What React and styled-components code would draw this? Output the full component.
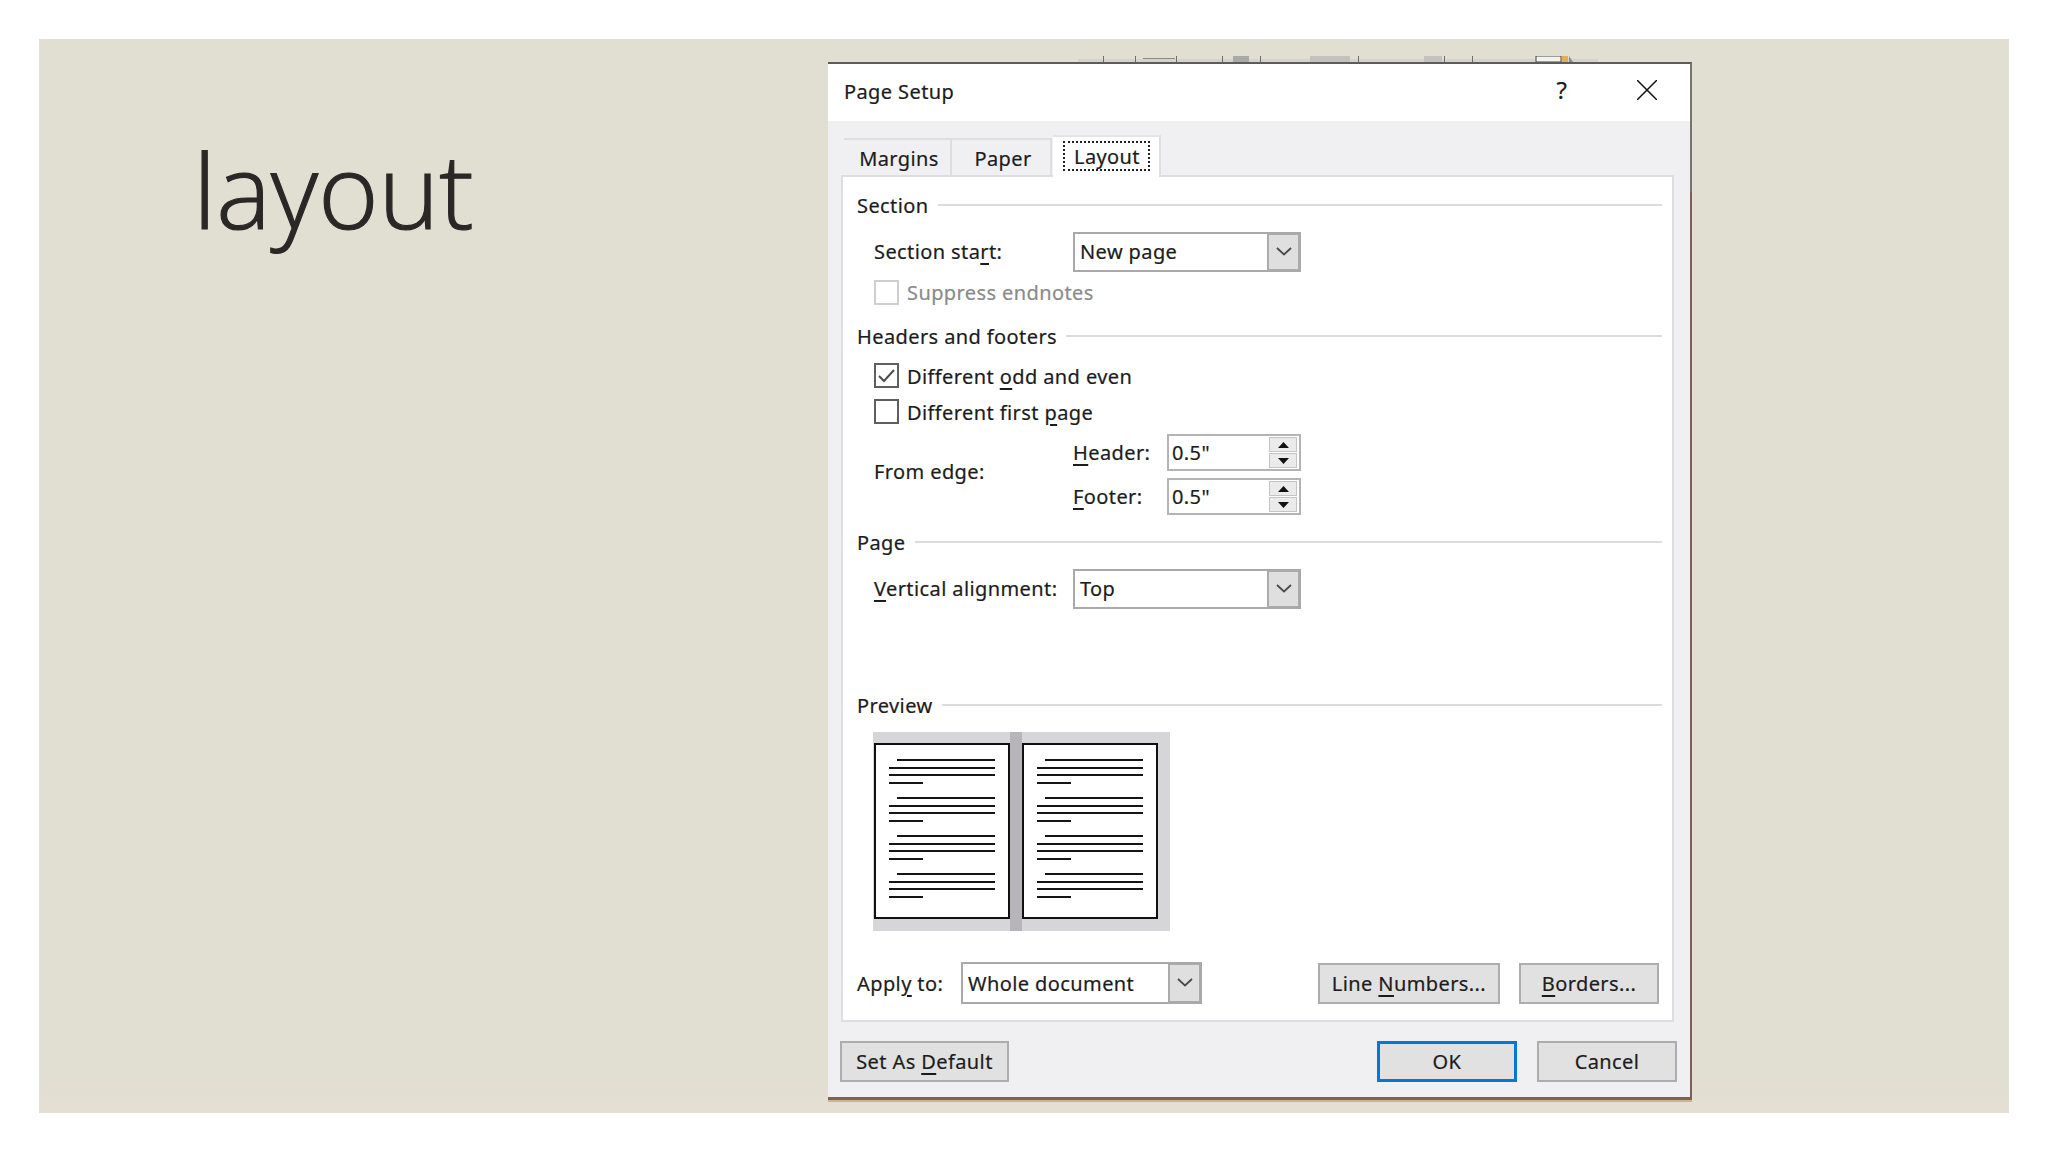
import styled, { createGlobalStyle } from 'styled-components'

const Global = createGlobalStyle`
  html, body {
    margin: 0;
    background: #fff;
  }
  body {
    font-family: 'Noto Sans', 'Open Sans', sans-serif;
    color: #1c1c1c;
    letter-spacing: 0.4px;
    -webkit-text-stroke: 0.2px currentColor;
  }
`

const Page = styled.div`
  width: 2048px;
  height: 1152px;
  padding: 39px;
  box-sizing: border-box;
`

const Slide = styled.div`
  width: 1970px;
  height: 1074px;
  display: flex;
  background: linear-gradient(#e1ded2 96%, #e5dfd3 100%);
`

const TitleCol = styled.div`
  width: 789px;
  padding: 90px 0 0 154px;
  box-sizing: border-box;
`

const SlideTitle = styled.h1`
  margin: 0;
  font-family: 'Open Sans', sans-serif;
  font-weight: 300;
  font-size: 103px;
  line-height: 120px;
  letter-spacing: 0;
  -webkit-text-stroke: 1.2px #2a2826;
  color: #2a2826;
`

const WindowCol = styled.div`
  width: 866px;
  padding-top: 17px;
`

const Ruler = styled.svg`
  display: block;
  width: 866px;
  height: 6px;
`

const Dialog = styled.div`
  position: relative;
  width: 864px;
  height: 1038px;
  box-sizing: border-box;
  background: #f0f0f3;
  border-top: 2px solid #5c5c5c;
  border-right: 2px solid #76746f;
  border-bottom: 3px solid #7d634f;
  box-shadow: 0 2px 0 #c9b394;

  &::after {
    content: '';
    position: absolute;
    right: -2px;
    top: 128px;
    bottom: -3px;
    width: 2px;
    background: #7d634f;
  }
`

const TitleBar = styled.div`
  height: 57px;
  box-sizing: border-box;
  display: flex;
  align-items: center;
  padding: 0 33px 5px 16px;
  background: #fff;
`

const DialogTitle = styled.div`
  font-size: 20px;
  flex: 1;
  margin-top: 3px;
`

const Help = styled.div`
  font-size: 24px;
  width: 16px;
  text-align: center;
  margin-right: 67px;
  margin-top: -2px;
`

const Tabs = styled.div`
  height: 54px;
  display: flex;
  align-items: flex-end;
  padding-left: 16px;
`

const Tab = styled.div`
  height: ${(p) => (p.$active ? '42px' : '37px')};
  width: ${(p) => p.$w}px;
  box-sizing: border-box;
  display: flex;
  align-items: center;
  justify-content: center;
  padding: ${(p) => (p.$active ? '0' : '1px 0 0 4px')};
  font-size: 20px;
  background: ${(p) => (p.$active ? '#fff' : 'transparent')};
  border-top: 2px solid ${(p) => (p.$active ? '#e4e4e6' : '#dedee1')};
  border-right: 2px solid #dedee1;
  position: relative;
  margin-bottom: ${(p) => (p.$active ? '-2px' : '0')};
  margin-left: ${(p) => (p.$active ? '1px' : '0')};
`

const Focus = styled.span`
  width: 87px;
  height: 30px;
  margin-bottom: 2px;
  padding-left: 2px;
  box-sizing: border-box;
  border: 2px dotted #222;
  display: flex;
  align-items: center;
  justify-content: center;
`

const Panel = styled.div`
  width: 833px;
  height: 847px;
  margin-left: 13px;
  box-sizing: border-box;
  padding: 0 10px 0 14px;
  background: #fff;
  border: 2px solid #dedee1;
`

const Heading = styled.div`
  display: flex;
  align-items: center;
  height: 26px;
  margin-top: ${(p) => p.$top}px;
  font-size: 20px;
`

const HeadingLine = styled.div`
  flex: 1;
  height: 2px;
  margin-left: 9px;
  margin-top: -1px;
  background: #dcdcdc;
`

const Row = styled.div`
  display: flex;
  align-items: center;
  margin-top: ${(p) => p.$top}px;
  padding-left: ${(p) => p.$indent ?? 17}px;
  font-size: 20px;
`

const Label = styled.div`
  width: ${(p) => p.$w ?? 199}px;
  flex-shrink: 0;
  padding-bottom: ${(p) => p.$lift ?? 2}px;
`

const Key = styled.span`
  text-decoration: underline;
  text-underline-offset: 4px;
  text-decoration-thickness: 2px;
`

const Combo = styled.div`
  width: ${(p) => p.$w ?? 228}px;
  height: ${(p) => p.$h ?? 40}px;
  box-sizing: border-box;
  display: flex;
  border: 2px solid #a9a9a9;
  background: #fff;
`

const ComboText = styled.div`
  flex: 1;
  padding: 0 0 ${(p) => p.$lift ?? 2}px 5px;
  display: flex;
  align-items: center;
`

const ComboButton = styled.div`
  width: 32px;
  box-sizing: border-box;
  padding-bottom: 2px;
  display: flex;
  align-items: center;
  justify-content: center;
  background: #dfdfdf;
  border: 1px solid #ababab;
  border-left-width: 2px;
`

const CheckRow = styled.div`
  display: flex;
  align-items: center;
  gap: 8px;
  height: 25px;
  margin-top: ${(p) => p.$top}px;
  margin-left: 17px;
  font-size: 20px;
  color: ${(p) => (p.$disabled ? '#8a8a8a' : 'inherit')};
`

const CheckText = styled.span`
  padding-top: 2px;
`

const Box = styled.span`
  width: 25px;
  height: 25px;
  box-sizing: border-box;
  display: flex;
  align-items: center;
  justify-content: center;
  border: 2px solid ${(p) => (p.$disabled ? '#cfcfcf' : '#5f5f5f')};
  background: #fff;
`

const EdgeGrid = styled.div`
  display: grid;
  grid-template-columns: 199px 94px 134px;
  grid-template-rows: 37px 37px;
  row-gap: 7px;
  align-items: center;
  margin: 10px 0 0 17px;
  font-size: 20px;
`

const EdgeLabel = styled.div`
  grid-row: 1 / span 2;
  margin-bottom: 6px;
`

const SpinInput = styled.div`
  height: 37px;
  box-sizing: border-box;
  display: flex;
  align-items: center;
  padding: 0 2px 0 3px;
  border: 2px solid #b4b4b4;
  background: #fff;
`

const SpinValue = styled.div`
  flex: 1;
`

const SpinButtons = styled.div`
  width: 28px;
  display: flex;
  flex-direction: column;
  gap: 1px;
`

const SpinButton = styled.div`
  height: 15px;
  display: flex;
  align-items: center;
  justify-content: center;
  background: #ebebeb;
  border: 1px solid #c4c4c4;
  box-sizing: border-box;
`

const PreviewBox = styled.div`
  display: flex;
  width: 297px;
  height: 199px;
  margin: 14px 0 0 16px;
  padding-left: 1px;
  box-sizing: border-box;
  background: #d6d5d8;
`

const Gutter = styled.div`
  width: 12px;
  background: #b7b5b9;
`

const Sheet = styled.div`
  width: 136px;
  height: 176px;
  margin-top: 11px;
  box-sizing: border-box;
  padding: 14px 13px 0;
  display: flex;
  flex-direction: column;
  gap: 13px;
  background: #fff;
  border: 2px solid #111;
`

const Para = styled.div`
  display: flex;
  flex-direction: column;
  gap: 5.67px;
`

const TextLine = styled.div`
  height: 2px;
  width: ${(p) => (p.$short ? '34px' : p.$indent ? '98px' : '106px')};
  margin-left: ${(p) => (p.$indent ? '8px' : '0')};
  background: #151515;
`

const Button = styled.div`
  width: ${(p) => p.$w}px;
  height: 41px;
  box-sizing: border-box;
  display: flex;
  align-items: center;
  justify-content: center;
  font-size: 20px;
  background: #e1e1e1;
  border: ${(p) => (p.$primary ? '3px solid #0078d7' : '2px solid #adadad')};
`

const ApplyActions = styled.div`
  margin-left: auto;
  padding-right: 3px;
  display: flex;
  gap: 19px;
`

const Footer = styled.div`
  display: flex;
  gap: 20px;
  margin-top: 19px;
  padding: 0 13px 0 12px;
`

const FooterSpacer = styled.div`
  flex: 1;
`

const Chevron = () => (
  <svg width="16" height="9" viewBox="0 0 16 9" fill="none" stroke="#4a4a4a" strokeWidth="1.8">
    <path d="M1 1l7 6.5L15 1" />
  </svg>
)

const Arrow = ({ down }) => (
  <svg width="11" height="6" viewBox="0 0 11 6" fill="#111">
    <path d={down ? 'M0 0h11L5.5 6z' : 'M5.5 0L11 6H0z'} />
  </svg>
)

const Spin = ({ value }) => (
  <SpinInput>
    <SpinValue>{value}</SpinValue>
    <SpinButtons>
      <SpinButton>
        <Arrow />
      </SpinButton>
      <SpinButton>
        <Arrow down />
      </SpinButton>
    </SpinButtons>
  </SpinInput>
)

const SheetPreview = () => (
  <Sheet>
    {[0, 1, 2, 3].map((i) => (
      <Para key={i}>
        <TextLine $indent />
        <TextLine />
        <TextLine />
        <TextLine $short />
      </Para>
    ))}
  </Sheet>
)

export default function App() {
  return (
    <Page>
      <Global />
      <Slide>
        <TitleCol>
          <SlideTitle>layout</SlideTitle>
        </TitleCol>
        <WindowCol>
          <Ruler viewBox="0 0 866 6">
            <rect x="250" y="3" width="520" height="3" fill="#d4d3cc" />
            <g fill="#6d6d6a">
              <rect x="275" y="0" width="1" height="6" />
              <rect x="307" y="0" width="1" height="6" />
              <rect x="348" y="0" width="1" height="6" />
              <rect x="394" y="0" width="1" height="6" />
              <rect x="432" y="0" width="1" height="6" />
              <rect x="530" y="0" width="1" height="6" />
              <rect x="616" y="0" width="1" height="6" />
              <rect x="644" y="0" width="1" height="6" />
            </g>
            <rect x="315" y="2" width="32" height="1" fill="#8a8a86" />
            <rect x="405" y="0" width="16" height="6" fill="#a9a9a6" />
            <rect x="482" y="0" width="40" height="6" fill="#c2c1bc" />
            <rect x="596" y="0" width="18" height="6" fill="#c2c1bc" />
            <rect x="708" y="0" width="25" height="6" fill="#f3f3ee" stroke="#444" />
            <rect x="734" y="0" width="6" height="6" fill="#e3ac58" />
            <path d="M741 0l4 6h-4z" fill="#8d8d88" />
          </Ruler>
          <Dialog>
            <TitleBar>
              <DialogTitle>Page Setup</DialogTitle>
              <Help>?</Help>
              <svg width="20" height="20" viewBox="0 0 20 20" stroke="#111" strokeWidth="1.5">
                <path d="M0 0l20 20M20 0L0 20" />
              </svg>
            </TitleBar>
            <Tabs>
              <Tab $w={108}>Margins</Tab>
              <Tab $w={100}>Paper</Tab>
              <Tab $w={108} $active>
                <Focus>Layout</Focus>
              </Tab>
            </Tabs>
            <Panel>
              <Heading $top={15}>
                Section
                <HeadingLine />
              </Heading>
              <Row $top={14}>
                <Label>
                  Section sta<Key>r</Key>t:
                </Label>
                <Combo>
                  <ComboText>New page</ComboText>
                  <ComboButton>
                    <Chevron />
                  </ComboButton>
                </Combo>
              </Row>
              <CheckRow $top={8} $disabled>
                <Box $disabled />
                Suppress endnotes
              </CheckRow>
              <Heading $top={18}>
                Headers and footers
                <HeadingLine />
              </Heading>
              <CheckRow $top={14}>
                <Box>
                  <svg width="17" height="14" viewBox="0 0 17 14" fill="none" stroke="#4d4d4d" strokeWidth="2">
                    <path d="M1 7l5 5L16 1" />
                  </svg>
                </Box>
                <CheckText>
                  Different <Key>o</Key>dd and even
                </CheckText>
              </CheckRow>
              <CheckRow $top={11}>
                <Box />
                <CheckText>
                  Different first <Key>p</Key>age
                </CheckText>
              </CheckRow>
              <EdgeGrid>
                <EdgeLabel>From edge:</EdgeLabel>
                <div>
                  <Key>H</Key>eader:
                </div>
                <Spin value={'0.5"'} />
                <div>
                  <Key>F</Key>ooter:
                </div>
                <Spin value={'0.5"'} />
              </EdgeGrid>
              <Heading $top={14}>
                Page
                <HeadingLine />
              </Heading>
              <Row $top={14}>
                <Label>
                  <Key>V</Key>ertical alignment:
                </Label>
                <Combo>
                  <ComboText>Top</ComboText>
                  <ComboButton>
                    <Chevron />
                  </ComboButton>
                </Combo>
              </Row>
              <Heading $top={83}>
                Preview
                <HeadingLine />
              </Heading>
              <PreviewBox>
                <SheetPreview />
                <Gutter />
                <SheetPreview />
              </PreviewBox>
              <Row $top={31} $indent={0}>
                <Label $w={104} $lift={0}>
                  Appl<Key>y</Key> to:
                </Label>
                <Combo $w={241} $h={42}>
                  <ComboText $lift={0}>Whole document</ComboText>
                  <ComboButton>
                    <Chevron />
                  </ComboButton>
                </Combo>
                <ApplyActions>
                  <Button $w={182}>
                    <span>
                      Line <Key>N</Key>umbers...
                    </span>
                  </Button>
                  <Button $w={140}>
                    <span>
                      <Key>B</Key>orders...
                    </span>
                  </Button>
                </ApplyActions>
              </Row>
            </Panel>
            <Footer>
              <Button $w={169}>
                <span>
                  Set As <Key>D</Key>efault
                </span>
              </Button>
              <FooterSpacer />
              <Button $w={140} $primary>
                OK
              </Button>
              <Button $w={140}>Cancel</Button>
            </Footer>
          </Dialog>
        </WindowCol>
      </Slide>
    </Page>
  )
}
